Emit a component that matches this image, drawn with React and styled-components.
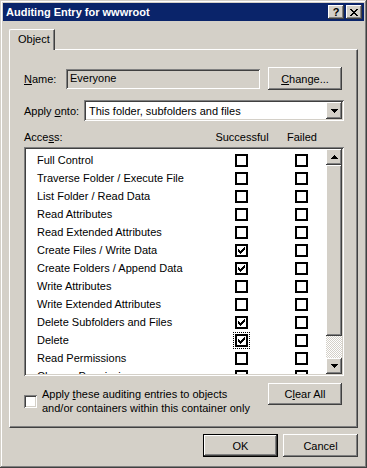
import React from "react";
import styled, { createGlobalStyle, css } from "styled-components";

const GlobalStyle = createGlobalStyle`
  html, body {
    margin: 0;
    padding: 0;
    background: #d4d0c8;
  }
  body {
    font-family: "Liberation Sans", Arial, sans-serif;
    font-size: 11px;
    color: #000;
  }
`;

const raised = css`
  background: #d4d0c8;
  box-shadow: inset -1px -1px #404040, inset 1px 1px #fff,
    inset -2px -2px #808080, inset 2px 2px #d4d0c8;
`;

const sunken = css`
  box-shadow: inset 1px 1px #808080, inset -1px -1px #fff,
    inset 2px 2px #404040, inset -2px -2px #d4d0c8;
`;

const Window = styled.div`
  width: 367px;
  height: 468px;
  box-sizing: border-box;
  padding: 3px;
  background: #d4d0c8;
  box-shadow: inset -1px -1px #404040, inset 1px 1px #d4d0c8,
    inset -2px -2px #808080, inset 2px 2px #fff;
  display: flex;
  flex-direction: column;
`;

const TitleBar = styled.div`
  height: 18px;
  background: #0a246a;
  display: flex;
  align-items: center;
  padding: 0 2px 0 2px;
`;

const Title = styled.div`
  flex: 1;
  color: #fff;
  font-weight: bold;
  font-size: 11px;
  padding-left: 1px;
`;

const CaptionButtons = styled.div`
  display: flex;
  gap: 2px;
`;

const CaptionButton = styled.div`
  ${raised};
  width: 16px;
  height: 14px;
  display: flex;
  align-items: center;
  justify-content: center;
  font-weight: bold;
  font-size: 11px;
  line-height: 14px;
`;

const Body = styled.div`
  flex: 1;
  padding: 8px 6px 0 6px;
  display: flex;
  flex-direction: column;
`;

const TabStrip = styled.div`
  height: 20px;
  display: flex;
  align-items: flex-end;
`;

const Tab = styled.div`
  position: relative;
  z-index: 1;
  width: 46px;
  height: 21px;
  box-sizing: border-box;
  margin-bottom: -1px;
  background: #d4d0c8;
  border-top: 1px solid #fff;
  border-left: 1px solid #fff;
  border-right: 1px solid #404040;
  border-top-left-radius: 2px;
  box-shadow: inset -1px 0 #808080;
  padding: 3px 0 0 8px;
`;

const TabPanel = styled.div`
  height: 379px;
  box-sizing: border-box;
  border-top: 1px solid #fff;
  border-left: 1px solid #fff;
  border-right: 1px solid #404040;
  border-bottom: 1px solid #404040;
  box-shadow: inset -1px -1px #808080;
  padding: 17px 13px 0 14px;
  display: flex;
  flex-direction: column;
`;

const FieldRow = styled.div`
  display: flex;
  align-items: center;
  height: ${(p) => p.$height}px;
  margin-top: ${(p) => p.$top || 0}px;
`;

const Label = styled.div`
  width: ${(p) => p.$width}px;
  flex: none;
`;

const ReadOnlyField = styled.div`
  ${sunken};
  flex: 1;
  height: 20px;
  box-sizing: border-box;
  padding: 3px 4px;
  background: #d4d0c8;
`;

const Button = styled.div`
  ${raised};
  width: ${(p) => p.$width || 75}px;
  height: ${(p) => p.$height || 23}px;
  box-sizing: border-box;
  display: flex;
  align-items: center;
  justify-content: center;
  flex: none;
  margin-left: ${(p) => (p.$push ? "auto" : "0")};
  margin-right: ${(p) => p.$right || 0}px;
  ${(p) =>
    p.$default &&
    css`
      border: 1px solid #000;
    `}
`;

const Combo = styled.div`
  ${sunken};
  flex: 1;
  height: 21px;
  box-sizing: border-box;
  background: #fff;
  padding: 2px;
  display: flex;
  align-items: center;
`;

const ComboText = styled.div`
  flex: 1;
  padding-left: 3px;
`;

const ArrowButton = styled.div`
  ${raised};
  width: 16px;
  height: ${(p) => p.$height || 16}px;
  flex: none;
  display: flex;
  align-items: center;
  justify-content: center;
`;

const AccessHeader = styled.div`
  margin-top: 8px;
  height: 16px;
  display: grid;
  grid-template-columns: 1fr 60px 60px;
  align-items: center;
  padding-right: 12px;
`;

const ColumnHead = styled.div`
  text-align: center;
`;

const ListBox = styled.div`
  ${sunken};
  margin-top: 2px;
  height: 229px;
  box-sizing: border-box;
  background: #fff;
  padding: 2px;
  display: flex;
`;

const Rows = styled.div`
  flex: 1;
  overflow: hidden;
  padding-top: 2px;
`;

const Row = styled.div`
  height: 18px;
  display: grid;
  grid-template-columns: 1fr 13px 13px;
  column-gap: 47px;
  align-items: center;
  padding: 0 18px 0 11px;
  white-space: nowrap;
`;

const CheckBox = styled.div`
  width: 13px;
  height: 13px;
  box-sizing: border-box;
  border: 2px solid #000;
  background: #fff;
  display: flex;
  align-items: center;
  justify-content: center;
  ${(p) =>
    p.$focused &&
    css`
      outline: 1px dotted #000;
      outline-offset: 1px;
    `}
`;

const ScrollBar = styled.div`
  width: 16px;
  display: flex;
  flex-direction: column;
`;

const Thumb = styled.div`
  ${raised};
  height: 171px;
`;

const Track = styled.div`
  flex: 1;
  background: repeating-conic-gradient(#fff 0 25%, #d4d0c8 0 50%) 0 0 / 2px
    2px;
`;

const BottomRow = styled.div`
  margin-top: 7px;
  display: flex;
  align-items: flex-start;
`;

const ApplyGroup = styled.div`
  margin-top: 4px;
  display: flex;
  align-items: center;
  gap: 5px;
`;

const ClassicCheck = styled.div`
  ${sunken};
  width: 13px;
  height: 13px;
  background: #fff;
  flex: none;
`;

const ApplyText = styled.div`
  line-height: 14px;
`;

const DialogButtons = styled.div`
  margin-top: 6px;
  display: flex;
  justify-content: flex-end;
  gap: 5px;
`;

const permissions = [
  { name: "Full Control" },
  { name: "Traverse Folder / Execute File" },
  { name: "List Folder / Read Data" },
  { name: "Read Attributes" },
  { name: "Read Extended Attributes" },
  { name: "Create Files / Write Data", ok: true },
  { name: "Create Folders / Append Data", ok: true },
  { name: "Write Attributes" },
  { name: "Write Extended Attributes" },
  { name: "Delete Subfolders and Files", ok: true },
  { name: "Delete", ok: true, focus: true },
  { name: "Read Permissions" },
  { name: "Change Permissions" },
  { name: "Take Ownership" },
];

// classic 7x7 pixel checkmark
const Check = () => (
  <svg width="7" height="7" viewBox="0 0 7 7" shapeRendering="crispEdges">
    <rect x="6" y="0" width="1" height="1" />
    <rect x="5" y="1" width="2" height="1" />
    <rect x="0" y="2" width="1" height="1" />
    <rect x="4" y="2" width="3" height="1" />
    <rect x="0" y="3" width="2" height="1" />
    <rect x="3" y="3" width="3" height="1" />
    <rect x="0" y="4" width="5" height="1" />
    <rect x="1" y="5" width="3" height="1" />
    <rect x="2" y="6" width="1" height="1" />
  </svg>
);

const Arrow = ({ up }) => (
  <svg width="7" height="4" viewBox="0 0 7 4" shapeRendering="crispEdges">
    {[0, 1, 2, 3].map((i) => (
      <rect key={i} x={i} y={up ? 3 - i : i} width={7 - i * 2} height="1" />
    ))}
  </svg>
);

const CloseGlyph = () => (
  <svg width="8" height="7" viewBox="0 0 8 7" shapeRendering="crispEdges">
    <path d="M0 0h2v1h-2zM6 0h2v1h-2zM1 1h2v1h-2zM5 1h2v1h-2zM2 2h4v1h-4zM3 3h2v1h-2zM2 4h4v1h-4zM1 5h2v1h-2zM5 5h2v1h-2zM0 6h2v1h-2zM6 6h2v1h-2z" />
  </svg>
);

export default function App() {
  return (
    <>
      <GlobalStyle />
      <Window>
        <TitleBar>
          <Title>Auditing Entry for wwwroot</Title>
          <CaptionButtons>
            <CaptionButton>?</CaptionButton>
            <CaptionButton>
              <CloseGlyph />
            </CaptionButton>
          </CaptionButtons>
        </TitleBar>
        <Body>
          <TabStrip>
            <Tab>Object</Tab>
          </TabStrip>
          <TabPanel>
            <FieldRow $height={23}>
              <Label $width={42}>
                <u>N</u>ame:
              </Label>
              <ReadOnlyField>Everyone</ReadOnlyField>
              <Button $width={74} $right={2} style={{ marginLeft: 8 }}>
                <span>
                  <u>C</u>hange...
                </span>
              </Button>
            </FieldRow>
            <FieldRow $height={21} $top={10}>
              <Label $width={60}>
                Apply <u>o</u>nto:
              </Label>
              <Combo>
                <ComboText>This folder, subfolders and files</ComboText>
                <ArrowButton $height={17}>
                  <Arrow />
                </ArrowButton>
              </Combo>
            </FieldRow>
            <AccessHeader>
              <div>
                Acce<u>s</u>s:
              </div>
              <ColumnHead>Successful</ColumnHead>
              <ColumnHead>Failed</ColumnHead>
            </AccessHeader>
            <ListBox>
              <Rows>
                {permissions.map((p) => (
                  <Row key={p.name}>
                    <span>{p.name}</span>
                    <CheckBox $focused={p.focus}>{p.ok && <Check />}</CheckBox>
                    <CheckBox />
                  </Row>
                ))}
              </Rows>
              <ScrollBar>
                <ArrowButton>
                  <Arrow up />
                </ArrowButton>
                <Thumb />
                <Track />
                <ArrowButton>
                  <Arrow />
                </ArrowButton>
              </ScrollBar>
            </ListBox>
            <BottomRow>
              <ApplyGroup>
                <ClassicCheck />
                <ApplyText>
                  Apply <u>t</u>hese auditing entries to objects
                  <br />
                  and/or containers within this container only
                </ApplyText>
              </ApplyGroup>
              <Button $width={74} $height={22} $push $right={2}>
                <span>
                  C<u>l</u>ear All
                </span>
              </Button>
            </BottomRow>
          </TabPanel>
          <DialogButtons>
            <Button $default>OK</Button>
            <Button>Cancel</Button>
          </DialogButtons>
        </Body>
      </Window>
    </>
  );
}
